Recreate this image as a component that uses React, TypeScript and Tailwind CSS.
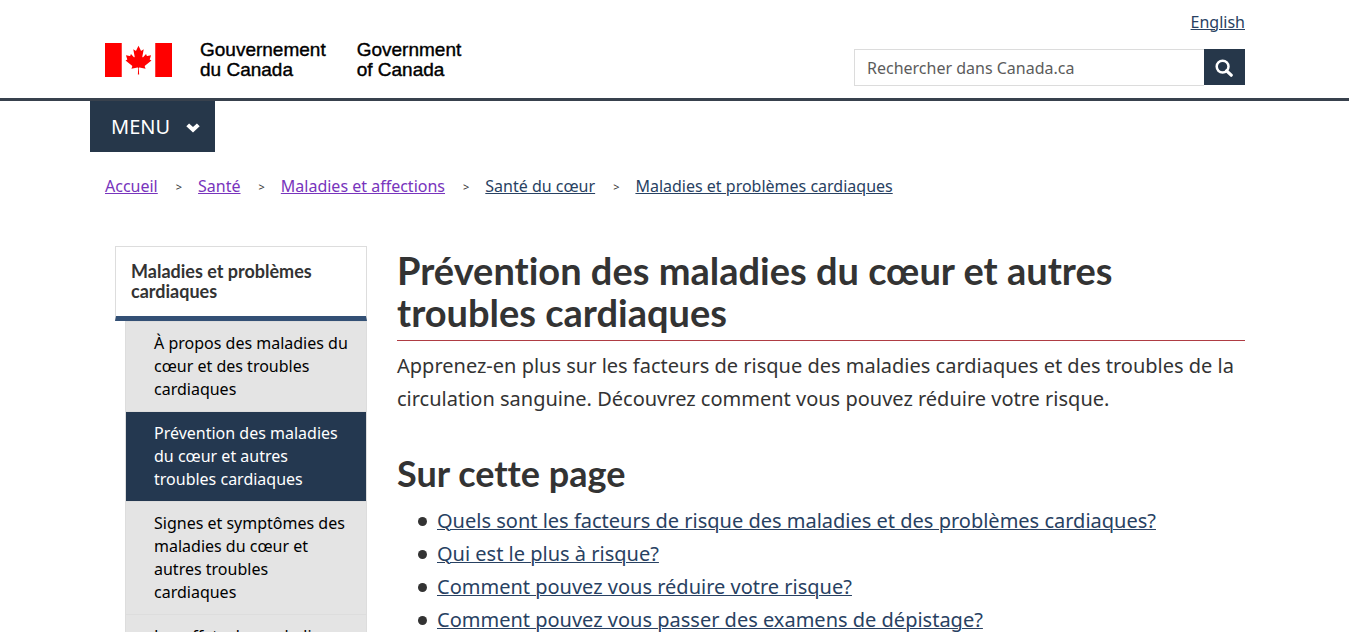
import React from "react";

const crumbs = [
  { label: "Accueil", visited: true },
  { label: "Santé", visited: true },
  { label: "Maladies et affections", visited: true },
  { label: "Santé du cœur", visited: false },
  { label: "Maladies et problèmes cardiaques", visited: false },
];

const sections = [
  { label: "À propos des maladies du cœur et des troubles cardiaques", active: false },
  { label: "Prévention des maladies du cœur et autres troubles cardiaques", active: true },
  { label: "Signes et symptômes des maladies du cœur et autres troubles cardiaques", active: false },
  { label: "Les effets des maladies du cœur", active: false },
];

const topics = [
  "Quels sont les facteurs de risque des maladies et des problèmes cardiaques?",
  "Qui est le plus à risque?",
  "Comment pouvez vous réduire votre risque?",
  "Comment pouvez vous passer des examens de dépistage?",
];

function Flag() {
  return (
    <svg viewBox="0 0 9600 4800" className="h-[34px] w-[67px]" preserveAspectRatio="none" aria-hidden="true">
      <path fill="#f00" d="M0 0h2400v4800H0zM7200 0h2400v4800H7200z" />
      <path
        fill="#f00"
        d="m4890 4430-45-863a95 95 0 0 1 111-98l859 151-116-320a65 65 0 0 1 20-73l941-762-212-99a65 65 0 0 1-34-79l186-572-542 115a65 65 0 0 1-73-38l-105-247-423 454a65 65 0 0 1-111-57l204-1052-327 189a65 65 0 0 1-91-27l-332-652-332 652a65 65 0 0 1-91 27l-327-189 204 1052a65 65 0 0 1-111 57l-423-454-105 247a65 65 0 0 1-73 38l-542-115 186 572a65 65 0 0 1-34 79l-212 99 941 762a65 65 0 0 1 20 73l-116 320 859-151a95 95 0 0 1 111 98l-45 863z"
      />
    </svg>
  );
}

function Header() {
  return (
    <header className="border-b-[3px] border-[#38414d]">
      <div className="mx-auto flex h-[98px] max-w-[1169px] items-start justify-between pr-[14px] pl-[15px]">
        <a
          href="#accueil"
          className="mt-10 flex font-['Liberation_Sans',Arial,sans-serif] text-[19px] leading-5 text-black [-webkit-text-stroke:0.4px_black]"
        >
          <span className="mt-[3px] mr-7">
            <Flag />
          </span>
          <span className="mr-[31px]">
            Gouvernement
            <br />
            du Canada
          </span>
          <span>
            Government
            <br />
            of Canada
          </span>
        </a>
        <div className="flex flex-col items-end">
          <a href="#en" lang="en" className="mt-2.5 leading-6 text-[#284162] underline decoration-1">
            English
          </a>
          <form className="mt-[15px] flex items-start" onSubmit={(e) => e.preventDefault()}>
            <input
              id="search"
              type="search"
              aria-label="Rechercher dans Canada.ca"
              placeholder="Rechercher dans Canada.ca"
              className="h-[37px] w-[350px] border border-r-0 border-[#dcdcdc] bg-white px-3 text-base text-[#333] outline-none placeholder:text-[#5c5c5c]"
            />
            <button
              type="submit"
              aria-label="Recherche"
              className="flex h-9 w-[41px] items-center justify-center bg-[#26374a] pr-px text-white"
            >
              <svg viewBox="0 0 18 18" className="mt-0.5 size-[18px]" fill="none" stroke="currentColor" aria-hidden="true">
                <circle cx="7.6" cy="7.6" r="5.9" strokeWidth="2.5" />
                <path d="M11.6 11.8 16.2 16.2" strokeWidth="3.2" strokeLinecap="round" />
              </svg>
            </button>
          </form>
        </div>
      </div>
    </header>
  );
}

export default function App() {
  return (
    <div className="h-screen overflow-hidden bg-white font-['Noto_Sans',sans-serif] text-base text-[#333]">
      <Header />
      <nav aria-label="Menu" className="mx-auto max-w-[1169px]">
        <button
          type="button"
          className="flex h-[51px] w-[125px] items-center justify-between bg-[#26374a] pr-[15px] pl-[21px] text-[20px] text-white"
        >
          MENU
          <svg viewBox="0 0 14 11" className="mt-0.5 h-[11px] w-[14px]" fill="currentColor" aria-hidden="true">
            <path d="M.3 4.3 3.1 1.4 7 5.1 10.9 1.4 13.7 4.3 7 10.6z" />
          </svg>
        </button>
      </nav>
      <nav aria-label="Fil d’Ariane" className="mx-auto max-w-[1169px] pt-[22px] pr-[14px] pl-[15px]">
        <ol className="flex items-center leading-6">
          {crumbs.map((c, i) => (
            <li key={c.label} className="flex items-center">
              {i > 0 && (
                <span aria-hidden="true" className="mr-4 ml-[18px] pt-0.5 text-[11px] leading-5">
                  &gt;
                </span>
              )}
              <a
                href="#fil"
                className={
                  c.visited ? "text-[#7834bc] underline decoration-1" : "text-[#284162] underline decoration-1"
                }
              >
                {c.label}
              </a>
            </li>
          ))}
        </ol>
      </nav>
      <div className="mx-auto flex max-w-[1169px] items-start pt-12 pr-[14px] pl-[15px]">
        <nav aria-label="Section" className="ml-2.5 w-[252px] shrink-0">
          <h2 className="border border-b-[5px] border-[#ddd] border-b-[#335075] px-[15px] pt-[14px] pb-[15px] font-['Lato',sans-serif] text-[18px] leading-5 font-bold [font-variant-ligatures:none]">
            Maladies et problèmes cardiaques
          </h2>
          <ul className="ml-2.5 border-x border-t border-[#ddd] bg-[#e4e4e4] leading-[23px]">
            {sections.map((s) => (
              <li key={s.label} className="border-b border-[#ddd]">
                <a
                  href="#section"
                  aria-current={s.active ? "page" : undefined}
                  className={
                    s.active
                      ? "block bg-[#243850] py-2.5 pr-3.5 pl-7 text-white"
                      : "block py-2.5 pr-3.5 pl-7 text-black"
                  }
                >
                  {s.label}
                </a>
              </li>
            ))}
          </ul>
        </nav>
        <main className="ml-[30px] min-w-0 flex-1 text-[20px] leading-[33px]">
          <h1 className="border-b border-[#af3c43] pt-[3px] pb-[7px] font-['Lato',sans-serif] text-[38px] leading-[42px] font-bold [font-variant-ligatures:none]">
            Prévention des maladies du cœur et autres troubles cardiaques
          </h1>
          <p className="pt-2">
            Apprenez-en plus sur les facteurs de risque des maladies cardiaques et des troubles de la circulation
            sanguine. Découvrez comment vous pouvez réduire votre risque.
          </p>
          <h2 className="mt-[38px] font-['Lato',sans-serif] text-[36px] leading-10 font-bold [font-variant-ligatures:none]">
            Sur cette page
          </h2>
          <ul className="mt-[11px] pl-[21px]">
            {topics.map((t) => (
              <li
                key={t}
                className="flex items-start before:mt-[13px] before:mr-2.5 before:size-[9px] before:shrink-0 before:rounded-full before:bg-[#333] before:content-['']"
              >
                <a href="#sujet" className="text-[#284162] underline decoration-1">
                  {t}
                </a>
              </li>
            ))}
          </ul>
        </main>
      </div>
    </div>
  );
}
